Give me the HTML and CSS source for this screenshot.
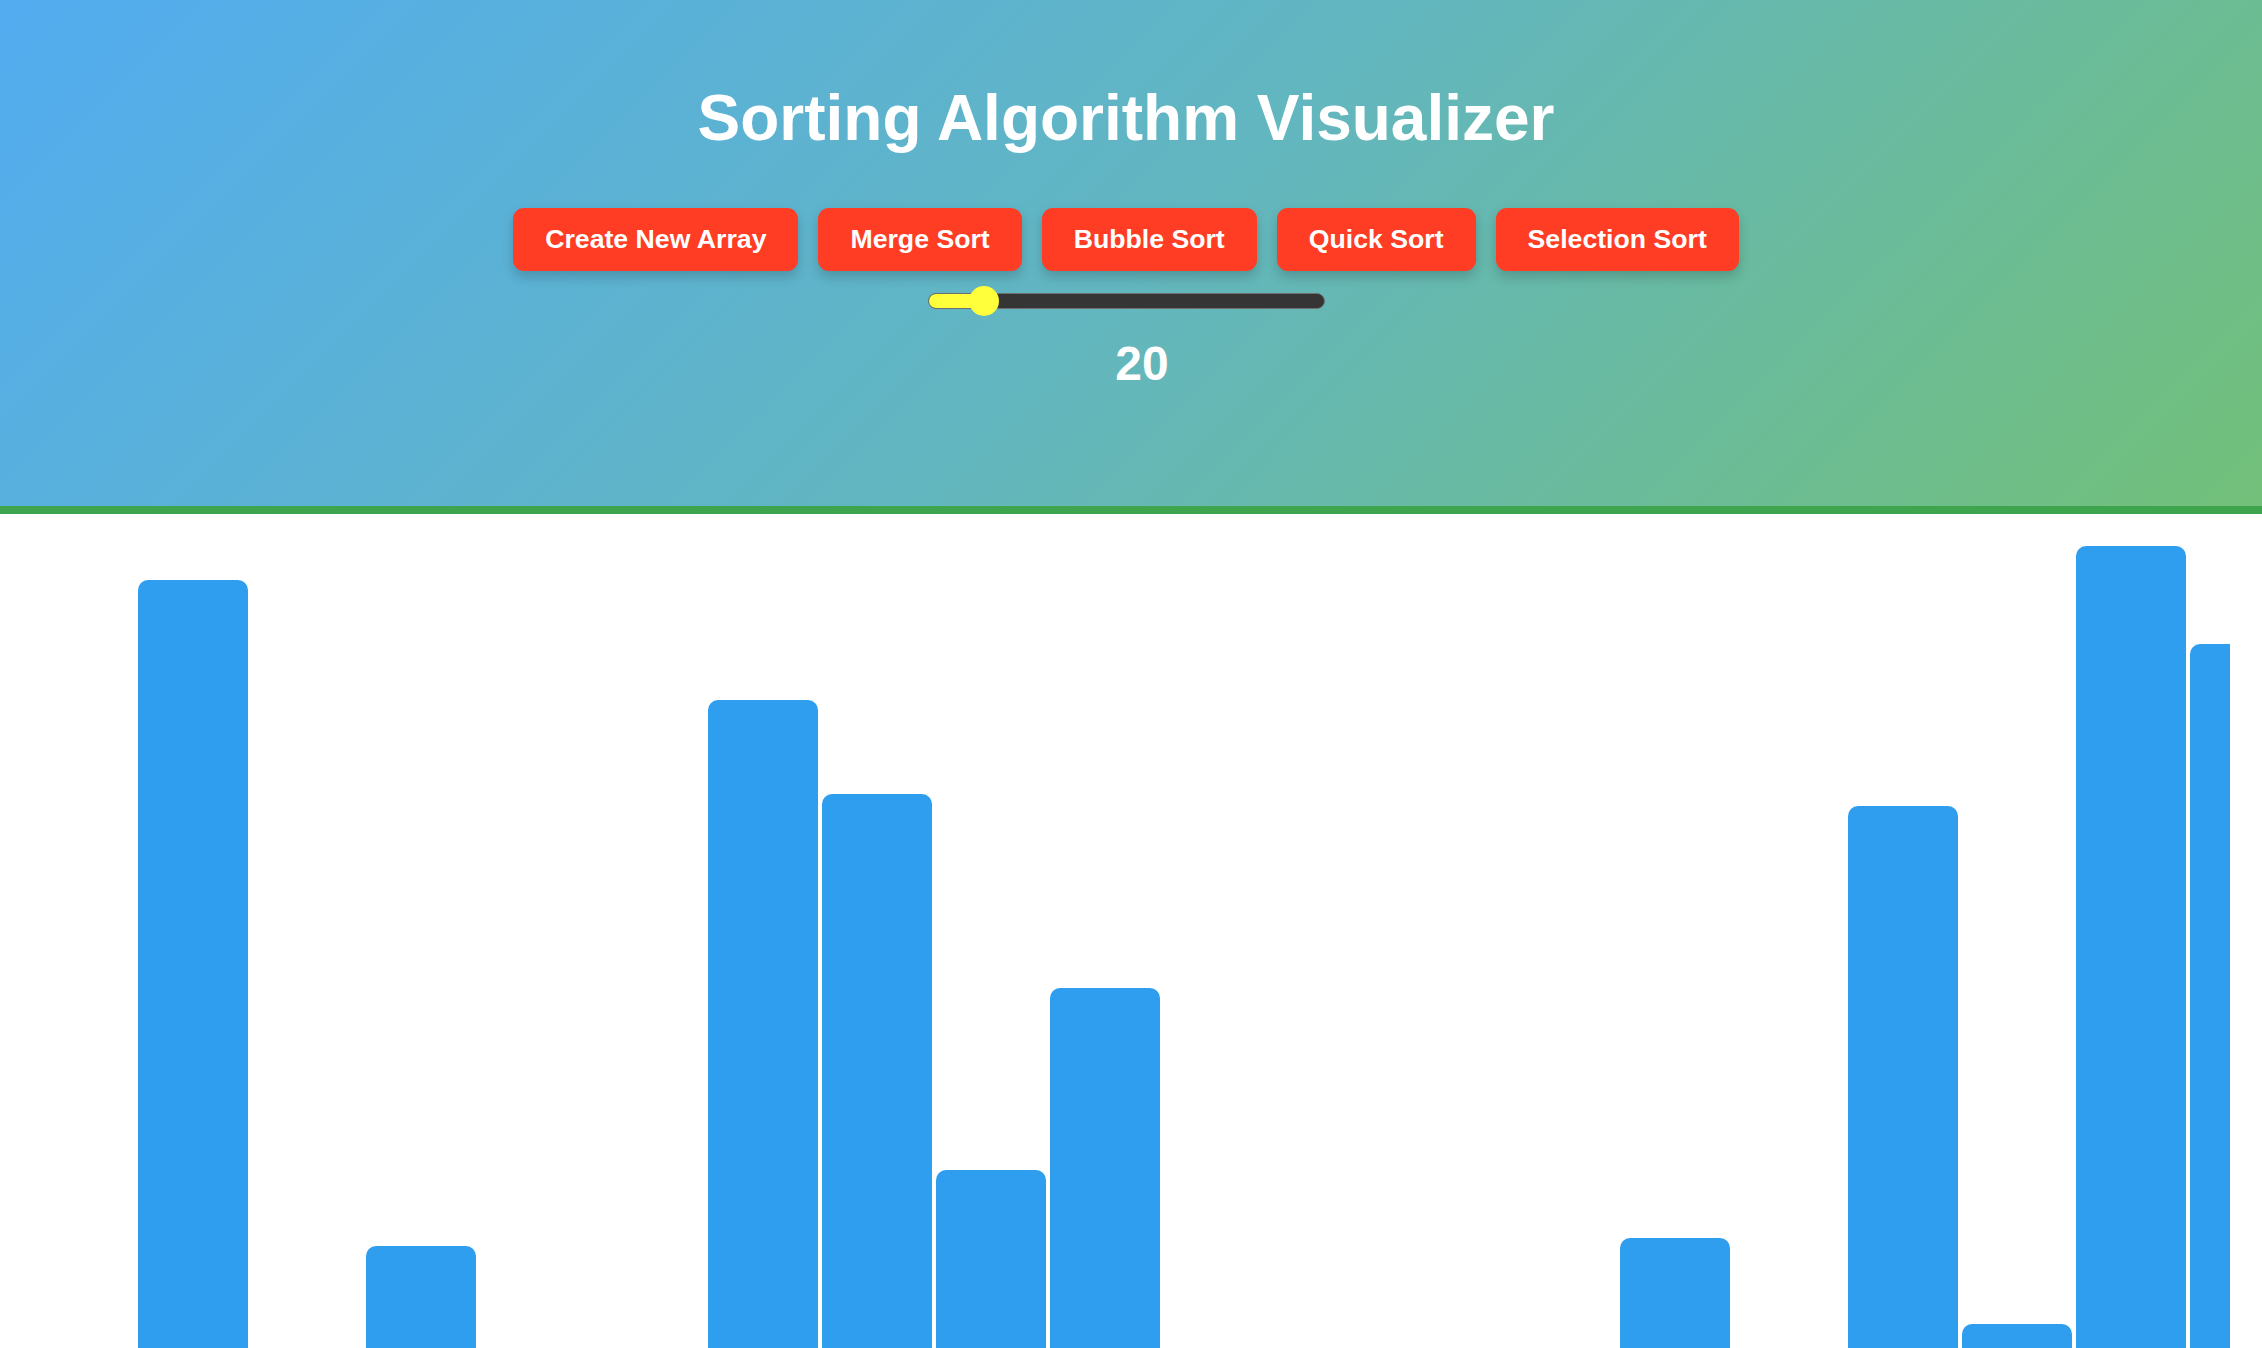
FILE: index.html
```html
<!DOCTYPE html>
<html lang="en">
<head>
<meta charset="utf-8">
<title>Sorting Algorithm Visualizer</title>
<link rel="stylesheet" href="styles.css">
</head>
<body>
<header class="header">
  <h1 class="title">Sorting Algorithm Visualizer</h1>
  <div class="controls">
    <button class="btn">Create New Array</button>
    <button class="btn">Merge Sort</button>
    <button class="btn">Bubble Sort</button>
    <button class="btn">Quick Sort</button>
    <button class="btn">Selection Sort</button>
  </div>
  <div class="slider" role="slider" aria-valuemin="10" aria-valuemax="100" aria-valuenow="20">
    <div class="slider-fill"></div>
    <div class="slider-thumb"></div>
  </div>
  <div class="value">20</div>
</header>
<main class="stage">
  <div class="bars">
    <div class="bar" style="height:900px"></div>
    <div class="bar" style="height:90px"></div>
    <div class="bar" style="height:234px"></div>
    <div class="bar" style="height:60px"></div>
    <div class="bar" style="height:110px"></div>
    <div class="bar" style="height:780px"></div>
    <div class="bar" style="height:686px"></div>
    <div class="bar" style="height:310px"></div>
    <div class="bar" style="height:492px"></div>
    <div class="bar" style="height:40px"></div>
    <div class="bar" style="height:120px"></div>
    <div class="bar" style="height:75px"></div>
    <div class="bar" style="height:100px"></div>
    <div class="bar" style="height:242px"></div>
    <div class="bar" style="height:55px"></div>
    <div class="bar" style="height:674px"></div>
    <div class="bar" style="height:156px"></div>
    <div class="bar" style="height:934px"></div>
    <div class="bar" style="height:836px"></div>
    <div class="bar" style="height:500px"></div>
  </div>
</main>
</body>
</html>
```

FILE: styles.css
```css
html, body {
  margin: 0;
  padding: 0;
  overflow: hidden;
  background: #ffffff;
  font-family: "Liberation Sans", Arial, Helvetica, sans-serif;
}

.header {
  box-sizing: border-box;
  height: 514px;
  padding: 81px 10px 0 0;
  background: linear-gradient(135deg, #52acf0 0%, #62b6c0 50%, #72c079 100%);
  border-bottom: 8px solid #3ea44e;
  display: flex;
  flex-direction: column;
  align-items: center;
  color: #ffffff;
}

.title {
  margin: 0;
  font-size: 64px;
  line-height: 74px;
  font-weight: 700;
  color: #ffffff;
}

.controls {
  margin-top: 53px;
  display: flex;
  gap: 20px;
}

.btn {
  font-family: "Liberation Sans", Arial, Helvetica, sans-serif;
  font-size: 26.67px;
  line-height: 31px;
  font-weight: 700;
  color: #ffffff;
  background: #fe3d24;
  border: none;
  border-radius: 11px;
  padding: 16px 32px;
  box-shadow: 0 6px 12px rgba(0, 0, 0, 0.18);
  cursor: pointer;
}

.slider {
  position: relative;
  box-sizing: border-box;
  margin-top: 22px;
  width: 397px;
  height: 16px;
  border: 1.5px solid #6f6f6f;
  border-radius: 8px;
  background: #353535;
}

.slider-fill {
  height: 100%;
  width: 56px;
  border-radius: 7px 0 0 7px;
  background: #ffff3b;
}

.slider-thumb {
  position: absolute;
  left: 40px;
  top: -8.5px;
  width: 30px;
  height: 30px;
  border-radius: 50%;
  background: #ffff3b;
}

.value {
  margin-top: 27px;
  padding-left: 32px;
  font-size: 48px;
  line-height: 55px;
  font-weight: 700;
  color: #ffffff;
}

.stage {
  display: block;
  height: 834px;
  margin-right: 32px;
  overflow: hidden;
}

.bars {
  display: flex;
  align-items: flex-end;
  gap: 4px;
  height: 966px;
  padding-left: 138px;
}

.bar {
  flex: 0 0 110px;
  width: 110px;
  background: #2f9eee;
  border-radius: 10px 10px 0 0;
}
```
